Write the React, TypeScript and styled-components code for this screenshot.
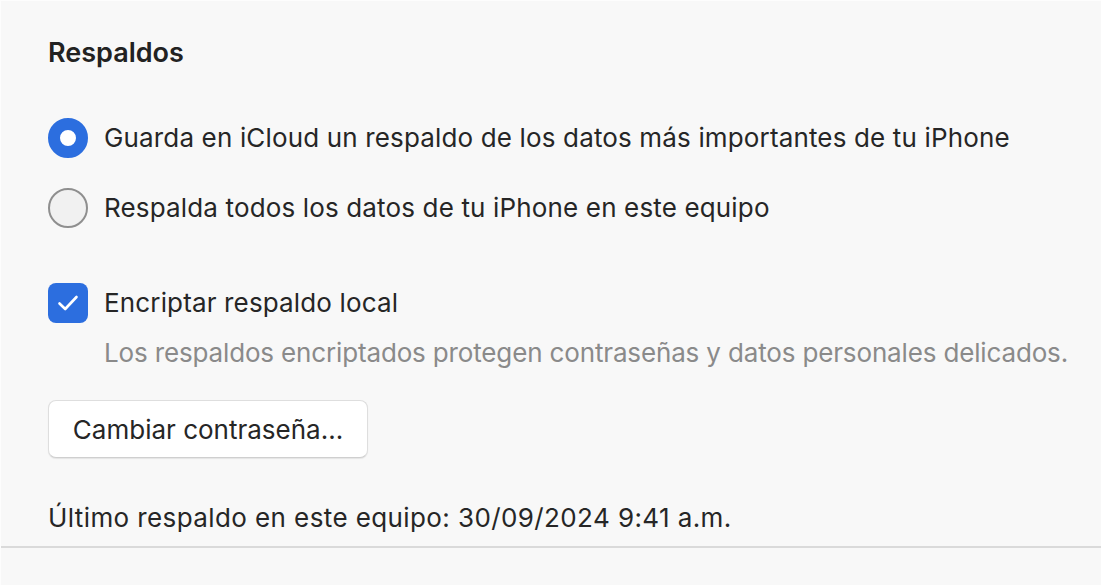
import styled, { createGlobalStyle } from "styled-components";

const GlobalStyle = createGlobalStyle`
  html, body {
    margin: 0;
    padding: 0;
    background: #f8f8f8;
  }
  body {
    font-family: "Inter", "Noto Sans", "Liberation Sans", sans-serif;
    color: #242424;
    -webkit-font-smoothing: antialiased;
  }
`;

const Page = styled.div`
  min-height: 585px;
  background: #f8f8f8;
  border-top: 1px solid #fdfdfd;
  border-left: 1px solid #fdfdfd;
  box-sizing: border-box;
`;

const Panel = styled.section`
  padding: 36px 20px 12px 47px;
  display: flex;
  flex-direction: column;
`;

const Title = styled.h2`
  margin: 0 0 49px;
  font-size: 27px;
  line-height: 32px;
  font-weight: 600;
  color: #222;
`;

const OptionGroup = styled.div`
  display: flex;
  flex-direction: column;
  gap: 30px;
`;

const Option = styled.label`
  display: flex;
  align-items: center;
  gap: 16px;
  height: 40px;
  font-size: 26px;
  line-height: 32px;
  letter-spacing: 0.15px;
  color: #262626;
  white-space: nowrap;
`;

const RadioMark = styled.span<{ $on?: boolean }>`
  width: 40px;
  height: 40px;
  border-radius: 50%;
  box-sizing: border-box;
  flex-shrink: 0;
  ${(p) =>
    p.$on
      ? `
    background: #fff;
    border: 12px solid #2c6edf;
  `
      : `
    background: #f1f1f1;
    border: 2px solid #8f8f8f;
  `}
`;

const CheckRow = styled(Option)`
  margin-top: 55px;
`;

const CheckBox = styled.span`
  width: 40px;
  height: 40px;
  border-radius: 8px;
  background: #2c6edf;
  display: flex;
  align-items: center;
  justify-content: center;
  flex-shrink: 0;
`;

const Hint = styled.p`
  margin: 14px 0 0 56px;
  font-size: 26px;
  line-height: 32px;
  letter-spacing: -0.15px;
  color: #8a8a8a;
  white-space: nowrap;
`;

const Button = styled.button`
  margin-top: 31px;
  align-self: flex-start;
  width: 320px;
  height: 58px;
  border-radius: 8px;
  border: 1px solid #dedede;
  border-bottom-color: #cfcfcf;
  background: #fff;
  box-shadow: 0 1px 1px rgba(0, 0, 0, 0.08);
  font-family: inherit;
  font-size: 26px;
  color: #262626;
  padding: 0;
`;

const LastBackup = styled.p`
  margin: 44px 0 0;
  font-size: 26px;
  line-height: 32px;
  letter-spacing: 0.4px;
  color: #262626;
`;

const Divider = styled.hr`
  margin: 0;
  border: none;
  height: 2px;
  background: #dadada;
`;

export default function App() {
  return (
    <>
      <GlobalStyle />
      <Page>
        <Panel>
          <Title>Respaldos</Title>
          <OptionGroup>
            <Option>
              <RadioMark $on />
              Guarda en iCloud un respaldo de los datos más importantes de tu iPhone
            </Option>
            <Option>
              <RadioMark />
              Respalda todos los datos de tu iPhone en este equipo
            </Option>
          </OptionGroup>
          <CheckRow>
            <CheckBox>
              <svg width="24" height="24" viewBox="0 0 24 24" fill="none">
                <path
                  d="M3.5 12.5 L9.2 18 L20.5 6"
                  stroke="#fff"
                  strokeWidth="2.6"
                  strokeLinecap="round"
                  strokeLinejoin="round"
                />
              </svg>
            </CheckBox>
            Encriptar respaldo local
          </CheckRow>
          <Hint>
            Los respaldos encriptados protegen contraseñas y datos personales delicados.
          </Hint>
          <Button>Cambiar contraseña...</Button>
          <LastBackup>Último respaldo en este equipo: 30/09/2024 9:41 a.m.</LastBackup>
        </Panel>
        <Divider />
      </Page>
    </>
  );
}
